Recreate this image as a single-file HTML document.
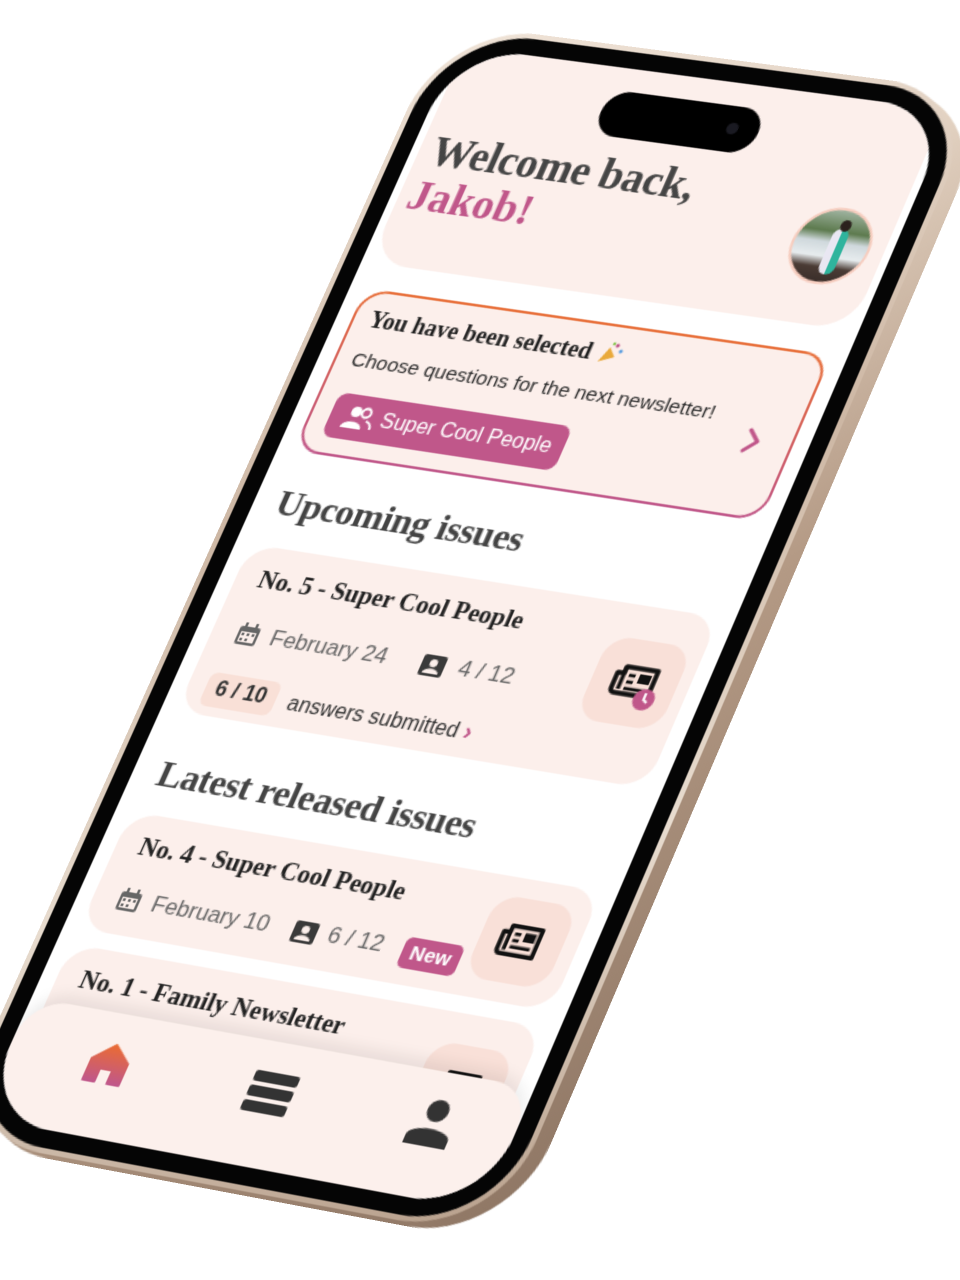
<!DOCTYPE html>
<html><head><meta charset="utf-8">
<style>
html,body{margin:0;padding:0;width:960px;height:1280px;overflow:hidden;background:#fff;}
#stage{position:absolute;left:0;top:0;width:390px;height:844px;transform-origin:0 0;
transform:matrix3d(1.21303,0.16013,0,-0.00005897,-0.56769,1.21688,0,-0.00004662,0,0,1,0,458,46,0,1);}
.abs{position:absolute;}
.side{left:-12px;top:-12px;width:430px;height:876px;border-radius:76px;
background:linear-gradient(135deg,#c8b19e 0%,#e6d6c6 30%,#b49a85 60%,#8d7563 100%);}
.rim{left:-17px;top:-17px;width:424px;height:878px;border-radius:74px;
background:linear-gradient(160deg,#f0e4d8,#cdb7a4 40%,#e8dccf 70%,#b79f8b);}
.bezel{left:-13px;top:-13px;width:416px;height:870px;border-radius:70px;background:#050505;}
.screen{left:0;top:0;width:390px;height:844px;border-radius:56px;background:#fff;overflow:hidden;}
.serif{font-family:"Liberation Serif",serif;}
.sans{font-family:"Liberation Sans",sans-serif;}
.card{background:#fcefeb;border-radius:22px;}
.ibox{background:#f9e0d8;border-radius:18px;}
</style></head>
<body>
<div id="stage">
  <div class="abs side"></div>
  <div class="abs rim"></div>
  <div class="abs bezel"></div>
  <div class="abs screen">
    <div class="abs" style="left:6px;top:-20px;width:378px;height:195px;background:#fcefeb;border-radius:0 0 30px 30px;"></div>
    <div class="abs" style="left:130px;top:18px;width:124px;height:36px;background:#000;border-radius:18px;"></div>
    <div class="abs" style="left:229px;top:31px;width:9px;height:9px;border-radius:50%;background:#1a1a22;"></div>
    <div class="abs serif" style="left:16px;top:66px;font-size:33px;font-weight:bold;color:#454545;letter-spacing:-0.3px;">Welcome back,</div>
    <div class="abs serif" style="left:14px;top:102px;font-size:33px;font-weight:bold;color:#c0578a;">Jakob!</div>
    <div class="abs" style="left:313px;top:84px;width:56px;height:56px;border-radius:50%;border:2px solid #f6cdbf;overflow:hidden;background:linear-gradient(180deg,#9fb3a0 0%,#5d7a4e 30%,#cfd8dc 45%,#e7ecee 65%,#4a3b34 80%,#3a2e2a 100%);">
      <div class="abs" style="left:26px;top:14px;width:12px;height:36px;border-radius:6px;background:linear-gradient(90deg,#e9e7f2 50%,#2fb49d 50%);"></div>
      <div class="abs" style="left:29px;top:7px;width:8px;height:9px;border-radius:50%;background:#2b211d;"></div>
    </div>
    <div class="abs" style="left:12px;top:195px;width:366px;height:130px;border-radius:20px;background:linear-gradient(180deg,#e8703a,#c0578a);"></div>
    <div class="abs" style="left:14px;top:197px;width:362px;height:126px;border-radius:18px;background:#fcefeb;"></div>
    <div class="abs serif" style="left:26px;top:208px;font-size:18px;font-weight:bold;color:#222;">You have been selected
      <svg width="20" height="18" viewBox="0 0 20 18" style="vertical-align:-2px"><path d="M3 17 L8 5 L14 12 Z" fill="#e9a93a"/><circle cx="13" cy="3" r="1.5" fill="#c0578a"/><circle cx="17" cy="7" r="1.5" fill="#5fa0e0"/><circle cx="10" cy="2" r="1.2" fill="#8fc85a"/></svg></div>
    <div class="abs sans" style="left:26px;top:242px;font-size:15.5px;color:#2e2e2e;">Choose questions for the next newsletter!</div>
    <div class="abs sans" style="left:28px;top:276px;width:184px;height:35px;border-radius:8px;background:#c0578a;color:#fff;font-size:16px;line-height:35px;">
      <svg class="abs" style="left:11px;top:8px" width="24" height="19" viewBox="0 0 24 19"><circle cx="8" cy="5" r="4" fill="#fff"/><path d="M0 18 C0 11 16 11 16 18 Z" fill="#fff"/><circle cx="16" cy="5" r="3.5" fill="none" stroke="#fff" stroke-width="1.8"/><path d="M18 11 C22 12 23 14 23 17" fill="none" stroke="#fff" stroke-width="1.8"/></svg>
      <span style="position:absolute;left:40px;">Super Cool People</span></div>
    <svg class="abs" style="left:340px;top:256px" width="14" height="22" viewBox="0 0 14 22"><path d="M3 3 L11 11 L3 19" fill="none" stroke="#c0578a" stroke-width="3" stroke-linecap="round" stroke-linejoin="round"/></svg>
    <div class="abs serif" style="left:18px;top:350px;font-size:28px;color:#444;font-weight:bold;letter-spacing:-0.3px;">Upcoming issues</div>
    <div class="abs card" style="left:12px;top:399px;width:366px;height:131px;"></div>
    <div class="abs serif" style="left:30px;top:414px;font-size:19px;font-weight:bold;color:#222;">No. 5 - Super Cool People</div>
    <svg class="abs" style="left:30px;top:456px" width="20" height="20" viewBox="0 0 20 20"><rect x="2" y="4" width="16" height="14" rx="2" fill="#666"/><rect x="4" y="8" width="12" height="8" fill="#fcefeb"/><rect x="5" y="1" width="2" height="4" fill="#666"/><rect x="13" y="1" width="2" height="4" fill="#666"/><g fill="#666"><rect x="5" y="9" width="2" height="2"/><rect x="9" y="9" width="2" height="2"/><rect x="13" y="9" width="2" height="2"/><rect x="5" y="13" width="2" height="2"/><rect x="9" y="13" width="2" height="2"/></g></svg>
    <div class="abs sans" style="left:58px;top:456px;font-size:17px;color:#666;">February 24</div>
    <svg class="abs" style="left:176px;top:458px" width="20" height="18" viewBox="0 0 20 18"><rect x="1" y="1" width="18" height="16" rx="2" fill="#3a3a3a"/><circle cx="10" cy="7" r="3" fill="#fcefeb"/><path d="M4 15 C4 10 16 10 16 15 Z" fill="#fcefeb"/></svg>
    <div class="abs sans" style="left:206px;top:456px;font-size:17px;color:#666;">4 / 12</div>
    <div class="abs sans" style="left:26px;top:497px;width:56px;height:26px;border-radius:6px;background:#f9e0d7;font-size:16px;font-weight:bold;color:#333;text-align:center;line-height:26px;">6 / 10</div>
    <div class="abs sans" style="left:92px;top:500px;font-size:16px;color:#333;">answers submitted <span style="color:#c0578a;font-size:18px;font-weight:bold;">›</span></div>
    <div class="abs ibox" style="left:305px;top:424px;width:64px;height:64px;">
      <svg class="abs" style="left:14px;top:17px" width="38" height="34" viewBox="0 0 38 34"><path d="M8 4 H32 V24 H6 A3 3 0 0 1 3 21 V9 H8 Z" fill="none" stroke="#111" stroke-width="3.5" stroke-linejoin="round"/><path d="M8 4 V21" stroke="#111" stroke-width="3"/><rect x="20" y="8" width="9" height="7" fill="#111"/><path d="M12 10 H17 M12 15 H17 M12 20 H28" stroke="#111" stroke-width="2.5"/><circle cx="30" cy="26" r="8" fill="#c0578a"/><path d="M30 21 V26 L33 28" stroke="#fff" stroke-width="1.8" fill="none"/></svg>
    </div>
    <div class="abs serif" style="left:20px;top:562px;font-size:28px;color:#444;font-weight:bold;letter-spacing:-0.3px;">Latest released issues</div>
    <div class="abs card" style="left:12px;top:608px;width:366px;height:90px;"></div>
    <div class="abs serif" style="left:30px;top:622px;font-size:19px;font-weight:bold;color:#222;">No. 4 - Super Cool People</div>
    <svg class="abs" style="left:30px;top:662px" width="20" height="20" viewBox="0 0 20 20"><rect x="2" y="4" width="16" height="14" rx="2" fill="#666"/><rect x="4" y="8" width="12" height="8" fill="#fcefeb"/><rect x="5" y="1" width="2" height="4" fill="#666"/><rect x="13" y="1" width="2" height="4" fill="#666"/><g fill="#666"><rect x="5" y="9" width="2" height="2"/><rect x="9" y="9" width="2" height="2"/><rect x="13" y="9" width="2" height="2"/><rect x="5" y="13" width="2" height="2"/><rect x="9" y="13" width="2" height="2"/></g></svg>
    <div class="abs sans" style="left:58px;top:662px;font-size:17px;color:#666;">February 10</div>
    <svg class="abs" style="left:168px;top:664px" width="20" height="18" viewBox="0 0 20 18"><rect x="1" y="1" width="18" height="16" rx="2" fill="#3a3a3a"/><circle cx="10" cy="7" r="3" fill="#fcefeb"/><path d="M4 15 C4 10 16 10 16 15 Z" fill="#fcefeb"/></svg>
    <div class="abs sans" style="left:196px;top:662px;font-size:17px;color:#666;">6 / 12</div>
    <div class="abs sans" style="left:254px;top:663px;width:44px;height:23px;border-radius:5px;background:#c0578a;color:#fff;font-size:15px;font-weight:bold;text-align:center;line-height:23px;">New</div>
    <div class="abs ibox" style="left:305px;top:622px;width:62px;height:62px;">
      <svg class="abs" style="left:13px;top:16px" width="36" height="30" viewBox="0 0 38 30"><path d="M8 4 H32 V26 H6 A3 3 0 0 1 3 23 V9 H8 Z" fill="none" stroke="#111" stroke-width="3.5" stroke-linejoin="round"/><path d="M8 4 V23" stroke="#111" stroke-width="3"/><rect x="20" y="8" width="9" height="7" fill="#111"/><path d="M12 10 H17 M12 15 H17 M12 20 H28" stroke="#111" stroke-width="2.5"/></svg>
    </div>
    <div class="abs card" style="left:12px;top:710px;width:366px;height:130px;"></div>
    <div class="abs serif" style="left:30px;top:724px;font-size:19px;font-weight:bold;color:#222;">No. 1 - Family Newsletter</div>
    <div class="abs ibox" style="left:305px;top:732px;width:62px;height:62px;">
      <svg class="abs" style="left:13px;top:16px" width="36" height="30" viewBox="0 0 38 30"><path d="M8 4 H32 V26 H6 A3 3 0 0 1 3 23 V9 H8 Z" fill="none" stroke="#111" stroke-width="3.5" stroke-linejoin="round"/><path d="M8 4 V23" stroke="#111" stroke-width="3"/><rect x="20" y="8" width="9" height="7" fill="#111"/></svg>
    </div>
    <div class="abs" style="left:0;top:753px;width:390px;height:100px;background:#fcf0ec;border-radius:30px 30px 0 0;box-shadow:0 -6px 12px rgba(0,0,0,0.08);"></div>
    <svg class="abs" style="left:62px;top:774px" width="32" height="32" viewBox="0 0 32 32"><defs><linearGradient id="hg" x1="0" y1="0" x2="0" y2="1"><stop offset="0" stop-color="#ea6b33"/><stop offset="1" stop-color="#c0578a"/></linearGradient></defs><path d="M16 2 L30 14 V30 H21 V20 H11 V30 H2 V14 Z" fill="url(#hg)" stroke="url(#hg)" stroke-width="2" stroke-linejoin="round"/></svg>
    <svg class="abs" style="left:186px;top:774px" width="36" height="32" viewBox="0 0 36 32"><rect x="1" y="1" width="34" height="8" rx="2" fill="#333"/><rect x="1" y="12" width="34" height="8" rx="2" fill="#333"/><rect x="1" y="23" width="34" height="8" rx="2" fill="#333"/></svg>
    <svg class="abs" style="left:312px;top:772px" width="34" height="36" viewBox="0 0 34 36"><circle cx="17" cy="9" r="8" fill="#333"/><path d="M1 35 V29 C1 20 33 20 33 29 V35 Z" fill="#333"/></svg>
  </div>
</div>
</body></html>
